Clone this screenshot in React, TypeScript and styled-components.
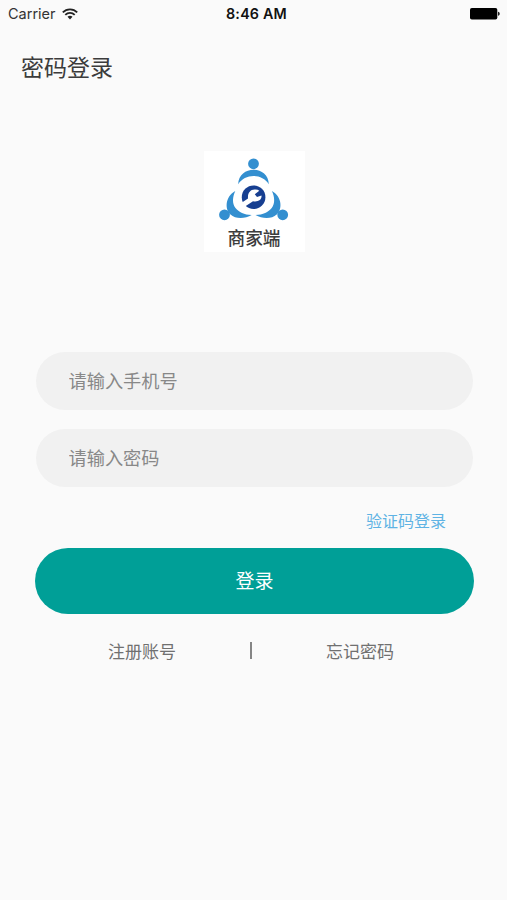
import React from "react";
import styled, { createGlobalStyle } from "styled-components";

const GlobalStyle = createGlobalStyle`
  *, *::before, *::after { box-sizing: border-box; }
  html, body { margin: 0; padding: 0; background: #fafafa; }
  body { font-family: "Noto Sans CJK SC", "Noto Sans", sans-serif; }
`;

const Screen = styled.main`
  width: 507px;
  height: 900px;
  background: #fafafa;
  overflow: hidden;
  display: flex;
  flex-direction: column;
`;

const StatusBar = styled.header`
  height: 27px;
  flex: none;
  display: grid;
  grid-template-columns: 1fr auto 1fr;
  align-items: center;
  padding: 0 7px 0 8px;
  color: #111;
  font-family: Inter, sans-serif;
  font-size: 14.5px;
`;

const Carrier = styled.div`
  display: flex;
  align-items: center;
  gap: 6px;
  color: #333;
`;

const Clock = styled.time`
  padding-left: 5px;
  font-weight: 600;
  font-size: 14.3px;
  letter-spacing: 0.2px;
`;

const BatterySlot = styled.div`
  display: flex;
  justify-content: flex-end;
`;

const Title = styled.h1`
  margin: 22px 0 0 21px;
  height: 36px;
  line-height: 35px;
  font-size: 23px;
  font-weight: 400;
  color: #3c3c3c;
`;

const LogoCard = styled.figure`
  width: 101px;
  height: 101px;
  margin: 66px 0 0 204px;
  background: #fff;
  display: flex;
  flex-direction: column;
  align-items: center;
`;

const LogoName = styled.figcaption`
  padding-right: 1px;
  line-height: 28px;
  font-size: 17.7px;
  font-weight: 500;
  color: #3c3c3c;
`;

const Form = styled.form`
  margin: 100px 33px 0 35px;
  display: flex;
  flex-direction: column;
`;

const Field = styled.input`
  width: 437px;
  height: 58px;
  margin: 0 0 19px 1px;
  padding: 0 33px 2px 32.5px;
  border: 0;
  border-radius: 29px;
  outline: 0;
  background: #f1f1f1;
  font: 400 18.2px "Noto Sans CJK SC", sans-serif;
  color: #333;
  &::placeholder { color: #888; opacity: 1; }
`;

const CodeLogin = styled.a`
  align-self: flex-end;
  margin: 1px 28px 0 0;
  height: 26px;
  line-height: 26px;
  font-size: 16px;
  color: #5eb3e4;
`;

const Submit = styled.button`
  height: 66px;
  margin-top: 15px;
  padding: 0 0 3px;
  border: 0;
  border-radius: 33px;
  background: #009f97;
  color: #fff;
  font: 400 19px "Noto Sans CJK SC", sans-serif;
`;

const Links = styled.nav`
  margin: 22px 113px 0 108px;
  height: 28px;
  display: flex;
  justify-content: space-between;
  align-items: center;
  font-size: 17px;
  color: #707070;
`;

const Divider = styled.span`
  width: 1.5px;
  height: 17px;
  background: #858585;
`;

const WifiIcon = () => (
  <svg width="16" height="12" viewBox="0 0 16 12" fill="none" stroke="#222" strokeWidth="1.8">
    <path d="M.8 4.4C4.7.3 11.3.3 15.2 4.4" />
    <path d="M3.3 6.9C5.9 4.2 10.1 4.2 12.7 6.9" />
    <path d="M5.5 8.8C6.9 7.4 9.1 7.4 10.5 8.8L8 11.4Z" fill="#222" stroke="none" />
  </svg>
);

const BatteryIcon = () => (
  <svg width="30" height="12" viewBox="0 0 30 12">
    <rect x="0" y="0" width="27.3" height="11.6" rx="1.8" fill="#000" />
    <path d="M28 3.8C30.3 4.3 30.3 7.3 28 7.8Z" fill="#222" />
  </svg>
);

const LogoMark = () => (
  <svg width="101" height="72" viewBox="0 0 101 72">
    <g fill="#338fd0">
      <circle cx="49.5" cy="12.8" r="5.4" />
      <circle cx="20.5" cy="63.8" r="5.4" />
      <circle cx="78.7" cy="63.8" r="5.4" />
      <path d="M34.2 33.2C34.5 13.8 64.5 13.8 64.8 33.2C58 22.2 41 22.2 34.2 33.2Z" />
      <path d="M31.3 40C20.5 46 21 59 26.5 63.5C31.5 68.3 41 68 47.7 64C40 63.8 35 61 31.5 57C28 52.5 28.5 46 31.3 40Z" />
      <path d="M67.9 40C78.7 46 78.2 59 72.7 63.5C67.7 68.3 58.2 68 51.5 64C59.2 63.8 64.2 61 67.7 57C71.2 52.5 70.7 46 67.9 40Z" />
    </g>
    <circle cx="49.6" cy="46.2" r="11.8" fill="#173f91" />
    <path d="M36.5 52.5L44 47.5C43.5 42 46.5 38.3 51 38.6Q53.5 38.4 55.3 39.8L50.8 43.2L53 46L57.5 44.6C58 48.5 54.5 51.3 49 50.3L41 55.5Z" fill="#fff" />
  </svg>
);

export default function App() {
  return (
    <Screen>
      <GlobalStyle />
      <StatusBar>
        <Carrier>Carrier<WifiIcon /></Carrier>
        <Clock>8:46 AM</Clock>
        <BatterySlot><BatteryIcon /></BatterySlot>
      </StatusBar>
      <Title>密码登录</Title>
      <LogoCard>
        <LogoMark />
        <LogoName>商家端</LogoName>
      </LogoCard>
      <Form>
        <Field type="tel" placeholder="请输入手机号" />
        <Field type="password" placeholder="请输入密码" />
        <CodeLogin>验证码登录</CodeLogin>
        <Submit type="button">登录</Submit>
      </Form>
      <Links>
        <span>注册账号</span>
        <Divider />
        <span>忘记密码</span>
      </Links>
    </Screen>
  );
}
